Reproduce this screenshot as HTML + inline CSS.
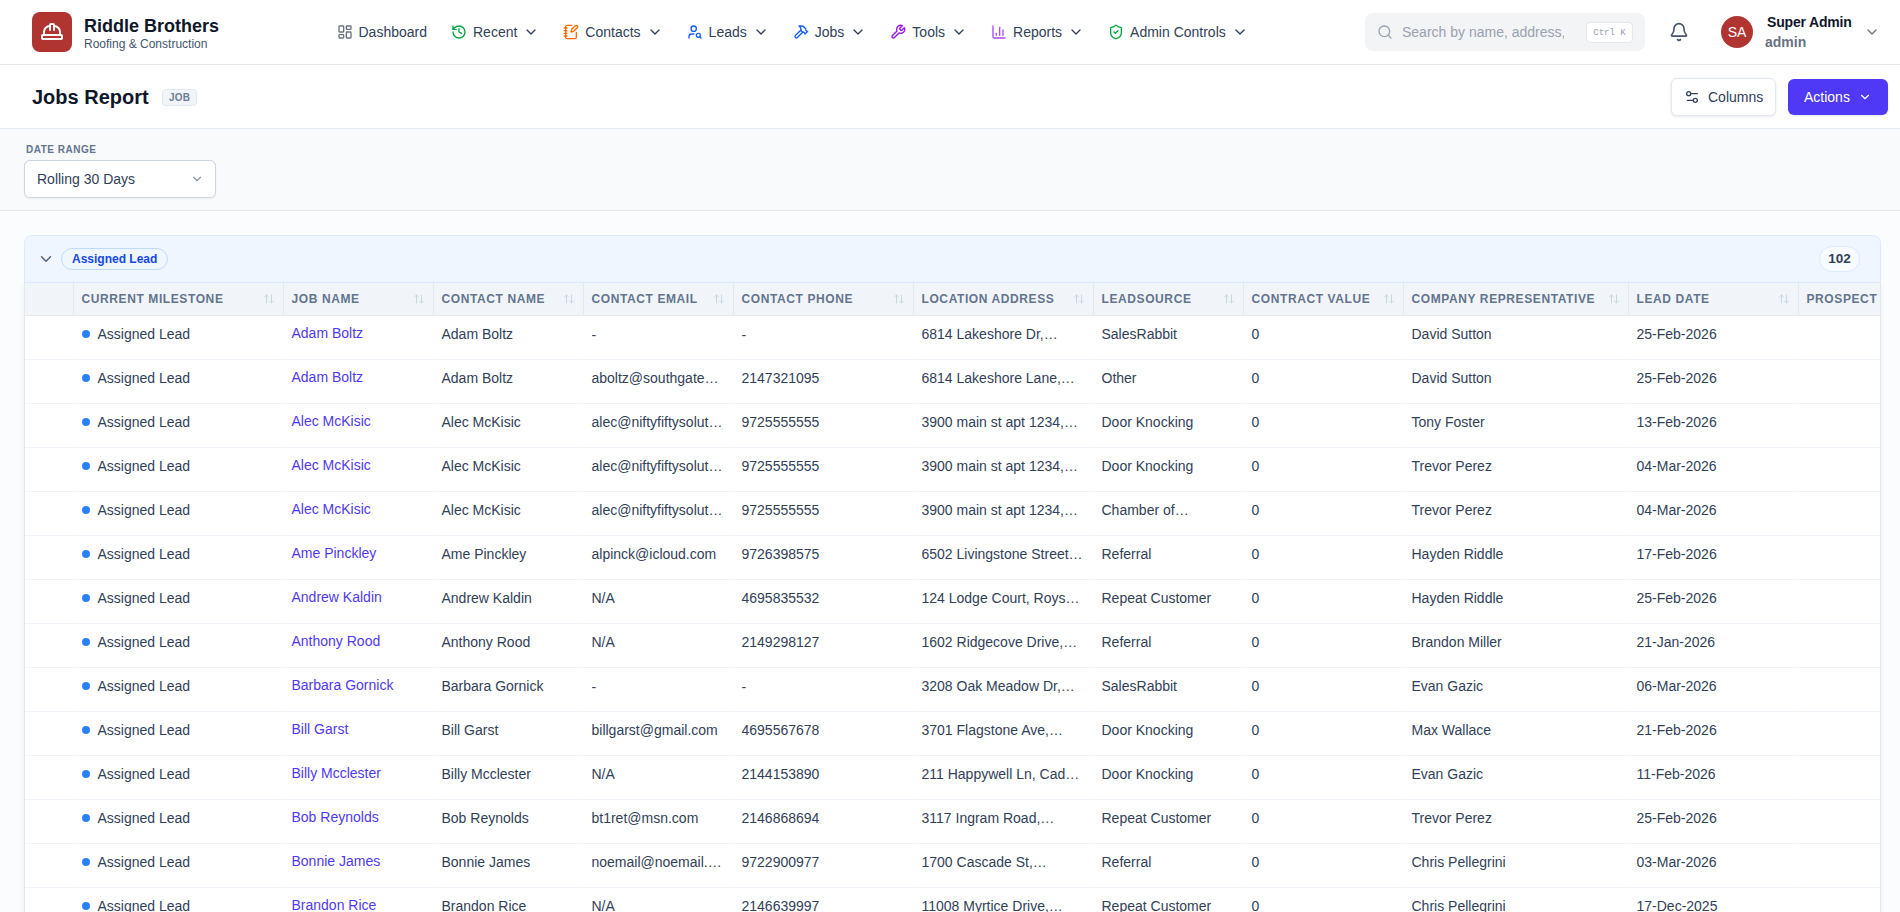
<!DOCTYPE html>
<html lang="en">
<head>
<meta charset="utf-8">
<title>Jobs Report</title>
<style>
*{box-sizing:border-box;margin:0;padding:0}
html,body{width:1900px;height:912px;overflow:hidden}
body{font-family:"Liberation Sans",Arial,sans-serif;font-size:14px;color:#314158;background:#fbfcfe;position:relative}
svg{display:block}
.ic{fill:none;stroke:currentColor;stroke-width:2;stroke-linecap:round;stroke-linejoin:round}
/* header */
#hdr{position:absolute;left:0;top:0;width:1900px;height:65px;background:#fff;border-bottom:1px solid #e5e7eb}
#logo{position:absolute;left:32px;top:12px;width:40px;height:40px;border-radius:8px;background:#b03531;color:#fff}
#logo svg{position:absolute;left:8px;top:8px}
#brand{position:absolute;left:84px;top:15px;font-weight:700;font-size:18px;line-height:22px;color:#0f172b;white-space:nowrap}
#brand2{position:absolute;left:84px;top:36px;font-size:12px;line-height:16px;color:#45556c;white-space:nowrap}
#nav{position:absolute;left:324.5px;top:14px;height:36px;display:flex;align-items:center;white-space:nowrap}
.ni{display:flex;align-items:center;padding:0 12px;height:36px;color:#314158;font-size:14px}
.ni svg.i{margin-right:6px}
.ni svg.c{margin-left:6px;color:#314158}
#search{position:absolute;left:1365px;top:13px;width:280px;height:38px;border-radius:8px;background:#f3f4f6}
#search svg{position:absolute;left:12px;top:11px;color:#99a1af}
#search .ph{position:absolute;left:37px;top:10px;width:161.6px;overflow:hidden;white-space:nowrap;color:#99a1af;font-size:14px;line-height:18px}
#search .kbd{position:absolute;left:221px;top:9px;width:47px;height:21px;border:1px solid #e5e7eb;border-radius:4px;background:#fff;color:#99a1af;font-family:"Liberation Mono",monospace;font-size:9px;line-height:21px;text-align:center}
#bell{position:absolute;left:1669px;top:22px;color:#45556c}
#av{position:absolute;left:1721px;top:16px;width:32px;height:32px;border-radius:50%;background:#b03531;color:#fff;font-size:14px;line-height:32px;text-align:center}
#un{position:absolute;left:1767px;top:13px;font-weight:700;letter-spacing:-.18px;font-size:14px;line-height:18px;color:#0f172b;white-space:nowrap}
#ur{position:absolute;left:1765px;top:33px;font-weight:700;font-size:14px;line-height:18px;color:#6a7282;white-space:nowrap}
#uc{position:absolute;left:1864px;top:24px;color:#6a7282}
/* sub header */
#sub{position:absolute;left:0;top:65px;width:1900px;height:64px;background:#fff;border-bottom:1px solid #e2e8f0}
#ttl{position:absolute;left:32px;top:19px;font-size:20px;line-height:26px;font-weight:700;color:#0f172b;white-space:nowrap}
#badge{position:absolute;left:162px;top:24px;width:35px;height:17px;border:1px solid #e2e8f0;background:#f1f5f9;border-radius:4px;font-size:10px;font-weight:700;line-height:15px;text-align:center;color:#6b7c95;letter-spacing:.2px;padding-left:.2px}
#bcol{position:absolute;left:1671px;top:13px;width:105px;height:38px;border:1px solid #e2e8f0;border-radius:6px;background:#fff;box-shadow:0 1px 3px rgba(0,0,0,.09);color:#314158;font-size:14px;line-height:36px}
#bcol svg{position:absolute;left:12px;top:10px}
#bcol span{position:absolute;left:36px;top:0}
#bact{position:absolute;left:1788px;top:14px;width:100px;height:36px;border-radius:6px;background:#4f39f6;color:#fff;font-size:14px;line-height:36px;box-shadow:0 1px 2px rgba(0,0,0,.1)}
#bact span{position:absolute;left:16px;top:0}
#bact svg{position:absolute;left:70px;top:11px}

/* filter */
#flt{position:absolute;left:0;top:129px;width:1900px;height:82px;background:#f8fafc;border-bottom:1px solid #e2e8f0}
#flt .lb{position:absolute;left:26px;top:13.5px;font-size:10px;line-height:14px;font-weight:700;color:#62748e;letter-spacing:.5px;white-space:nowrap}
#sel{position:absolute;left:24px;top:31px;width:192px;height:38px;border:1px solid #cad5e2;border-radius:6px;background:#fff;box-shadow:0 1px 2px rgba(0,0,0,.05)}
#sel span{position:absolute;left:12px;top:9px;font-size:14px;line-height:18px;color:#314158;white-space:nowrap}
#sel svg{position:absolute;left:165px;top:11px;color:#8796ab}
/* group */
#grp{position:absolute;left:24px;top:235px;width:1857px;height:700px;border:1px solid #dbeafe;border-radius:8px 8px 0 0;background:#eff6ff}
#gh{position:absolute;left:0;top:0;width:1855px;height:46px}
#gh svg{position:absolute;left:12px;top:14px;color:#51607a}
#pill{position:absolute;left:36px;top:12px;height:22px;padding:0 10px;border:1px solid #bedbff;border-radius:12px;background:#eff6ff;font-size:12px;line-height:20px;font-weight:700;color:#1447e6;white-space:nowrap}
#cnt{position:absolute;left:1794px;top:10px;width:41px;height:26px;border:1px solid #dbeafe;border-radius:13px;background:#f8fbff;font-size:13.5px;line-height:24px;font-weight:700;color:#314158;text-align:center}
#tw{position:absolute;left:-1px;top:46px;width:1857px;height:660px;overflow:hidden;background:#fff;border-left:1px solid #e3e8ef;border-right:1px solid #e3e8ef;box-shadow:0 2px 6px rgba(15,23,43,.06)}
table{border-collapse:separate;border-spacing:0;table-layout:fixed;width:1923px}
th{height:34px;background:#f1f5f9;border-top:1px solid #dbeafe;border-bottom:1px solid #e2e8f0;border-left:1px solid #e2e8f0;padding:0 0 0 7.5px;text-align:left;font-size:12px;font-weight:700;letter-spacing:.6px;color:#62748e;white-space:nowrap;position:relative;overflow:hidden}
th:first-child{border-left:0}
th svg{position:absolute;right:8px;top:10px;color:#cad5e2}
td{height:44px;border-bottom:1px solid #f0f4f8;border-left:1px solid #fff;padding:8px 8px 0 7.5px;font-size:14px;line-height:20px;color:#314158;white-space:nowrap;overflow:hidden;text-overflow:ellipsis;vertical-align:top}
td:first-child{border-left:0}
td a{color:#4f39f6;text-decoration:none;position:relative;top:-1px}
.hy{position:relative;top:1px}
.dot{display:inline-block;width:8px;height:8px;border-radius:50%;background:#2b7fff;margin-right:8px;position:relative;top:-1px}
</style>
</head>
<body>
<div id="hdr">
  <div id="logo"><svg class="ic" width="24" height="24" viewBox="0 0 24 24"><path d="M10 10V5a1 1 0 0 1 1-1h2a1 1 0 0 1 1 1v5"/><path d="M14 6a6 6 0 0 1 6 6v3"/><path d="M4 15v-3a6 6 0 0 1 6-6"/><rect x="2" y="15" width="20" height="4" rx="1"/></svg></div>
  <div id="brand">Riddle Brothers</div>
  <div id="brand2">Roofing &amp; Construction</div>
  <div id="nav">
    <div class="ni"><svg class="ic i" style="color:#6a7282" width="16" height="16" viewBox="0 0 24 24"><rect width="7" height="9" x="3" y="3" rx="1"/><rect width="7" height="5" x="14" y="3" rx="1"/><rect width="7" height="9" x="14" y="12" rx="1"/><rect width="7" height="5" x="3" y="16" rx="1"/></svg>Dashboard</div>
    <div class="ni"><svg class="ic i" style="color:#00a63e" width="16" height="16" viewBox="0 0 24 24"><path d="M3 12a9 9 0 1 0 9-9 9.750 9.750 0 0 0-6.740 2.740L3 8"/><path d="M3 3v5h5"/><path d="M12 7v5l4 2"/></svg>Recent<svg class="ic c" width="16" height="16" viewBox="0 0 24 24"><path d="m6 9 6 6 6-6"/></svg></div>
    <div class="ni"><svg class="ic i" style="color:#ff6900" width="16" height="16" viewBox="0 0 24 24"><path d="M13.400 2H6a2 2 0 0 0-2 2v16a2 2 0 0 0 2 2h12a2 2 0 0 0 2-2v-7.400"/><path d="M2 6h4"/><path d="M2 10h4"/><path d="M2 14h4"/><path d="M2 18h4"/><path d="M21.378 5.626a1 1 0 1 0-3.004-3.004l-5.010 5.012a2 2 0 0 0-.506.854l-.837 2.870a.5.5 0 0 0 .620.620l2.870-.837a2 2 0 0 0 .854-.506z"/></svg>Contacts<svg class="ic c" width="16" height="16" viewBox="0 0 24 24"><path d="m6 9 6 6 6-6"/></svg></div>
    <div class="ni"><svg class="ic i" style="color:#155dfc" width="16" height="16" viewBox="0 0 24 24"><circle cx="10" cy="7" r="4"/><path d="M10.300 15H7a4 4 0 0 0-4 4v2"/><circle cx="17" cy="17" r="3"/><path d="m21 21-1.900-1.900"/></svg>Leads<svg class="ic c" width="16" height="16" viewBox="0 0 24 24"><path d="m6 9 6 6 6-6"/></svg></div>
    <div class="ni"><svg class="ic i" style="color:#155dfc" width="16" height="16" viewBox="0 0 24 24"><path d="m15 12-8.373 8.373a1 1 0 1 1-3-3L12 9"/><path d="m18 15 4-4"/><path d="m21.500 11.500-1.914-1.914A2 2 0 0 1 19 8.172V7l-2.260-2.260a6 6 0 0 0-4.202-1.756L9 2.960l.920.820A6.180 6.180 0 0 1 12 8.400V10l2 2h1.172a2 2 0 0 1 1.414.586L18.500 14.500"/></svg>Jobs<svg class="ic c" width="16" height="16" viewBox="0 0 24 24"><path d="m6 9 6 6 6-6"/></svg></div>
    <div class="ni"><svg class="ic i" style="color:#9810fa" width="16" height="16" viewBox="0 0 24 24"><path d="M14.700 6.300a1 1 0 0 0 0 1.400l1.600 1.600a1 1 0 0 0 1.400 0l3.770-3.770a6 6 0 0 1-7.940 7.940l-6.910 6.910a2.120 2.120 0 0 1-3-3l6.910-6.910a6 6 0 0 1 7.940-7.940l-3.760 3.760z"/></svg>Tools<svg class="ic c" width="16" height="16" viewBox="0 0 24 24"><path d="m6 9 6 6 6-6"/></svg></div>
    <div class="ni"><svg class="ic i" style="color:#ad46ff" width="16" height="16" viewBox="0 0 24 24"><path d="M3 3v16a2 2 0 0 0 2 2h16"/><path d="M18 17V9"/><path d="M13 17V5"/><path d="M8 17v-3"/></svg>Reports<svg class="ic c" width="16" height="16" viewBox="0 0 24 24"><path d="m6 9 6 6 6-6"/></svg></div>
    <div class="ni"><svg class="ic i" style="color:#00a63e" width="16" height="16" viewBox="0 0 24 24"><path d="M20 13c0 5-3.500 7.500-7.660 8.950a1 1 0 0 1-.670-.010C7.500 20.500 4 18 4 13V6a1 1 0 0 1 1-1c2 0 4.500-1.200 6.240-2.720a1.170 1.170 0 0 1 1.520 0C14.510 3.810 17 5 19 5a1 1 0 0 1 1 1z"/><path d="m9 12 2 2 4-4"/></svg>Admin Controls<svg class="ic c" width="16" height="16" viewBox="0 0 24 24"><path d="m6 9 6 6 6-6"/></svg></div>
  </div>
  <div id="search"><svg class="ic" width="16" height="16" viewBox="0 0 24 24"><circle cx="11" cy="11" r="8"/><path d="m21 21-4.300-4.300"/></svg><div class="ph">Search by name, address, phone</div><div class="kbd">Ctrl K</div></div>
  <svg id="bell" class="ic" width="20" height="20" viewBox="0 0 24 24"><path d="M10.268 21a2 2 0 0 0 3.464 0"/><path d="M3.262 15.326A1 1 0 0 0 4 17h16a1 1 0 0 0 .740-1.673C19.410 13.956 18 12.499 18 8A6 6 0 0 0 6 8c0 4.499-1.411 5.956-2.738 7.326"/></svg>
  <div id="av">SA</div>
  <div id="un">Super Admin</div>
  <div id="ur">admin</div>
  <svg id="uc" class="ic" width="16" height="16" viewBox="0 0 24 24"><path d="m6 9 6 6 6-6"/></svg>
</div>
<div id="sub">
  <div id="ttl">Jobs Report</div>
  <div id="badge">JOB</div>
  <div id="bcol"><svg class="ic" width="16" height="16" viewBox="0 0 24 24"><path d="M20 7h-9"/><path d="M14 17H5"/><circle cx="17" cy="17" r="3"/><circle cx="7" cy="7" r="3"/></svg><span>Columns</span></div>
  <div id="bact"><span>Actions</span><svg class="ic" width="14" height="14" viewBox="0 0 24 24"><path d="m6 9 6 6 6-6"/></svg></div>
</div>
<div id="flt">
  <div class="lb">DATE RANGE</div>
  <div id="sel"><span>Rolling 30 Days</span><svg class="ic" width="14" height="14" viewBox="0 0 24 24"><path d="m6 9 6 6 6-6"/></svg></div>
</div>
<div id="grp">
 <div id="gh"><svg class="ic" width="18" height="18" viewBox="0 0 24 24"><path d="m6 9 6 6 6-6"/></svg><div id="pill">Assigned Lead</div><div id="cnt">102</div></div>
 <div id="tw"><table><colgroup><col style="width:48px"><col style="width:210px"><col style="width:150px"><col style="width:150px"><col style="width:150px"><col style="width:180px"><col style="width:180px"><col style="width:150px"><col style="width:160px"><col style="width:225px"><col style="width:170px"><col style="width:150px"></colgroup>
<thead><tr><th></th><th>CURRENT MILESTONE<svg class="ic" width="12" height="12" viewBox="0 0 24 24"><path d="m21 16-4 4-4-4"/><path d="M17 20V4"/><path d="m3 8 4-4 4 4"/><path d="M7 4v16"/></svg></th><th>JOB NAME<svg class="ic" width="12" height="12" viewBox="0 0 24 24"><path d="m21 16-4 4-4-4"/><path d="M17 20V4"/><path d="m3 8 4-4 4 4"/><path d="M7 4v16"/></svg></th><th>CONTACT NAME<svg class="ic" width="12" height="12" viewBox="0 0 24 24"><path d="m21 16-4 4-4-4"/><path d="M17 20V4"/><path d="m3 8 4-4 4 4"/><path d="M7 4v16"/></svg></th><th>CONTACT EMAIL<svg class="ic" width="12" height="12" viewBox="0 0 24 24"><path d="m21 16-4 4-4-4"/><path d="M17 20V4"/><path d="m3 8 4-4 4 4"/><path d="M7 4v16"/></svg></th><th>CONTACT PHONE<svg class="ic" width="12" height="12" viewBox="0 0 24 24"><path d="m21 16-4 4-4-4"/><path d="M17 20V4"/><path d="m3 8 4-4 4 4"/><path d="M7 4v16"/></svg></th><th>LOCATION ADDRESS<svg class="ic" width="12" height="12" viewBox="0 0 24 24"><path d="m21 16-4 4-4-4"/><path d="M17 20V4"/><path d="m3 8 4-4 4 4"/><path d="M7 4v16"/></svg></th><th>LEADSOURCE<svg class="ic" width="12" height="12" viewBox="0 0 24 24"><path d="m21 16-4 4-4-4"/><path d="M17 20V4"/><path d="m3 8 4-4 4 4"/><path d="M7 4v16"/></svg></th><th>CONTRACT VALUE<svg class="ic" width="12" height="12" viewBox="0 0 24 24"><path d="m21 16-4 4-4-4"/><path d="M17 20V4"/><path d="m3 8 4-4 4 4"/><path d="M7 4v16"/></svg></th><th>COMPANY REPRESENTATIVE<svg class="ic" width="12" height="12" viewBox="0 0 24 24"><path d="m21 16-4 4-4-4"/><path d="M17 20V4"/><path d="m3 8 4-4 4 4"/><path d="M7 4v16"/></svg></th><th>LEAD DATE<svg class="ic" width="12" height="12" viewBox="0 0 24 24"><path d="m21 16-4 4-4-4"/><path d="M17 20V4"/><path d="m3 8 4-4 4 4"/><path d="M7 4v16"/></svg></th><th>PROSPECT</th></tr></thead>
<tbody>
<tr><td></td><td><span class="dot"></span>Assigned Lead</td><td><a>Adam Boltz</a></td><td>Adam Boltz</td><td><span class="hy">-</span></td><td><span class="hy">-</span></td><td>6814 Lakeshore Dr,…</td><td>SalesRabbit</td><td>0</td><td>David Sutton</td><td>25-Feb-2026</td><td></td></tr>
<tr><td></td><td><span class="dot"></span>Assigned Lead</td><td><a>Adam Boltz</a></td><td>Adam Boltz</td><td>aboltz@southgate…</td><td>2147321095</td><td>6814 Lakeshore Lane,…</td><td>Other</td><td>0</td><td>David Sutton</td><td>25-Feb-2026</td><td></td></tr>
<tr><td></td><td><span class="dot"></span>Assigned Lead</td><td><a>Alec McKisic</a></td><td>Alec McKisic</td><td>alec@niftyfiftysolut…</td><td>9725555555</td><td>3900 main st apt 1234,…</td><td>Door Knocking</td><td>0</td><td>Tony Foster</td><td>13-Feb-2026</td><td></td></tr>
<tr><td></td><td><span class="dot"></span>Assigned Lead</td><td><a>Alec McKisic</a></td><td>Alec McKisic</td><td>alec@niftyfiftysolut…</td><td>9725555555</td><td>3900 main st apt 1234,…</td><td>Door Knocking</td><td>0</td><td>Trevor Perez</td><td>04-Mar-2026</td><td></td></tr>
<tr><td></td><td><span class="dot"></span>Assigned Lead</td><td><a>Alec McKisic</a></td><td>Alec McKisic</td><td>alec@niftyfiftysolut…</td><td>9725555555</td><td>3900 main st apt 1234,…</td><td>Chamber of…</td><td>0</td><td>Trevor Perez</td><td>04-Mar-2026</td><td></td></tr>
<tr><td></td><td><span class="dot"></span>Assigned Lead</td><td><a>Ame Pinckley</a></td><td>Ame Pinckley</td><td>alpinck@icloud.com</td><td>9726398575</td><td>6502 Livingstone Street…</td><td>Referral</td><td>0</td><td>Hayden Riddle</td><td>17-Feb-2026</td><td></td></tr>
<tr><td></td><td><span class="dot"></span>Assigned Lead</td><td><a>Andrew Kaldin</a></td><td>Andrew Kaldin</td><td>N/A</td><td>4695835532</td><td>124 Lodge Court, Roys…</td><td>Repeat Customer</td><td>0</td><td>Hayden Riddle</td><td>25-Feb-2026</td><td></td></tr>
<tr><td></td><td><span class="dot"></span>Assigned Lead</td><td><a>Anthony Rood</a></td><td>Anthony Rood</td><td>N/A</td><td>2149298127</td><td>1602 Ridgecove Drive,…</td><td>Referral</td><td>0</td><td>Brandon Miller</td><td>21-Jan-2026</td><td></td></tr>
<tr><td></td><td><span class="dot"></span>Assigned Lead</td><td><a>Barbara Gornick</a></td><td>Barbara Gornick</td><td><span class="hy">-</span></td><td><span class="hy">-</span></td><td>3208 Oak Meadow Dr,…</td><td>SalesRabbit</td><td>0</td><td>Evan Gazic</td><td>06-Mar-2026</td><td></td></tr>
<tr><td></td><td><span class="dot"></span>Assigned Lead</td><td><a>Bill Garst</a></td><td>Bill Garst</td><td>billgarst@gmail.com</td><td>4695567678</td><td>3701 Flagstone Ave,…</td><td>Door Knocking</td><td>0</td><td>Max Wallace</td><td>21-Feb-2026</td><td></td></tr>
<tr><td></td><td><span class="dot"></span>Assigned Lead</td><td><a>Billy Mcclester</a></td><td>Billy Mcclester</td><td>N/A</td><td>2144153890</td><td>211 Happywell Ln, Cad…</td><td>Door Knocking</td><td>0</td><td>Evan Gazic</td><td>11-Feb-2026</td><td></td></tr>
<tr><td></td><td><span class="dot"></span>Assigned Lead</td><td><a>Bob Reynolds</a></td><td>Bob Reynolds</td><td>bt1ret@msn.com</td><td>2146868694</td><td>3117 Ingram Road,…</td><td>Repeat Customer</td><td>0</td><td>Trevor Perez</td><td>25-Feb-2026</td><td></td></tr>
<tr><td></td><td><span class="dot"></span>Assigned Lead</td><td><a>Bonnie James</a></td><td>Bonnie James</td><td>noemail@noemail.…</td><td>9722900977</td><td>1700 Cascade St,…</td><td>Referral</td><td>0</td><td>Chris Pellegrini</td><td>03-Mar-2026</td><td></td></tr>
<tr><td></td><td><span class="dot"></span>Assigned Lead</td><td><a>Brandon Rice</a></td><td>Brandon Rice</td><td>N/A</td><td>2146639997</td><td>11008 Myrtice Drive,…</td><td>Repeat Customer</td><td>0</td><td>Chris Pellegrini</td><td>17-Dec-2025</td><td></td></tr>
</tbody></table></div>
</div>
</body>
</html>
